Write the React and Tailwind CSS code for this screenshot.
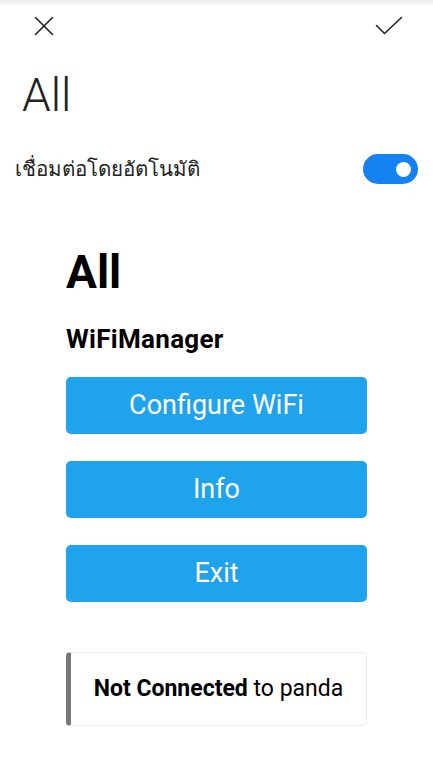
export default function App() {
  const buttons = ['Configure WiFi', 'Info', 'Exit'];

  return (
    <div className="w-[433px] h-[763px] bg-white overflow-hidden font-['Roboto','Liberation_Sans',sans-serif]">
      <div className="h-[6px] bg-gradient-to-b from-[#ececec] to-white" />

      <div className="flex justify-between items-center px-[34px] pr-[30px] h-[40px]">
        <svg width="20" height="20" viewBox="0 0 20 20" fill="none" stroke="#222" strokeWidth="1.6" strokeLinecap="round">
          <path d="M1.5 1.5 L18.5 18.5 M18.5 1.5 L1.5 18.5" />
        </svg>
        <svg width="28" height="20" viewBox="0 0 28 20" fill="none" stroke="#222" strokeWidth="1.6" strokeLinecap="round" strokeLinejoin="round">
          <path d="M1.5 9.5 L9.5 17.5 L26.5 1.5" />
        </svg>
      </div>

      <div className="pl-[22px] pt-[26px] text-[46px] leading-[46px] font-light text-[#222]">All</div>

      <div className="flex justify-between items-center pl-[15px] pr-[15px] mt-[31px] h-[40px]">
        <span className="text-[20.5px] text-[#222]">เชื่อมต่อโดยอัตโนมัติ</span>
        <div className="w-[55px] h-[30px] rounded-full bg-[#1482f0] flex items-center justify-end pr-[7px]">
          <div className="w-[15px] h-[15px] rounded-full bg-white" />
        </div>
      </div>

      <div className="mx-[66px] mt-[59px]">
        <h1 className="text-[46px] leading-[48px] font-bold text-black">All</h1>
        <h3 className="mt-[27px] text-[26px] leading-[32px] font-bold tracking-[0.3px] text-black">WiFiManager</h3>

        <div className="mt-[22px] flex flex-col gap-[27px]">
          {buttons.map((b) => (
            <button
              key={b}
              className="h-[57px] w-full rounded-[5px] bg-[#1fa3ec] text-white text-[27px]"
            >
              {b}
            </button>
          ))}
        </div>

        <div className="mt-[50px] h-[74px] flex items-center justify-center rounded-[4px] border border-[#eee] border-l-[5px] border-l-[#777] text-[23px] text-black">
          <span>
            <strong>Not Connected</strong> to panda
          </span>
        </div>
      </div>
    </div>
  );
}
